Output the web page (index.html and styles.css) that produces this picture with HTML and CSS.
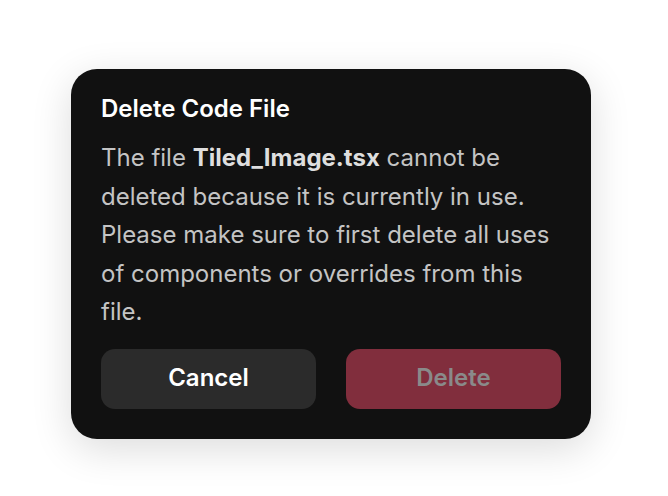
FILE: index.html
```html
<!DOCTYPE html>
<html>
<head>
<meta charset="utf-8">
<link rel="stylesheet" href="styles.css">
</head>
<body>
<div class="dialog">
  <h1 class="title">Delete Code File</h1>
  <p class="message">The file <strong>Tiled_Image.tsx</strong> cannot be deleted because it is currently in use. Please make sure to first delete all uses of components or overrides from this file.</p>
  <div class="actions">
    <button class="btn btn-cancel">Cancel</button>
    <button class="btn btn-delete">Delete</button>
  </div>
</div>
</body>
</html>
```
FILE: styles.css
```css
* { box-sizing: border-box; }
html, body { margin: 0; padding: 0; background: #ffffff; }
body {
  width: 668px;
  height: 496px;
  font-family: Inter, "Noto Sans", sans-serif;
  padding: 69px 0 0 71px;
}
.dialog {
  width: 520px;
  height: 370px;
  background: #111111;
  border-radius: 26px;
  padding: 23px 30px 30px;
  display: flex;
  flex-direction: column;
  box-shadow: 0 10px 40px rgba(0,0,0,0.14);
}
.title {
  margin: 0;
  font-size: 24px;
  line-height: 34px;
  font-weight: 600;
  color: #ffffff;
}
.message {
  margin: 13px 0 0;
  font-size: 24px;
  line-height: 38.5px;
  color: #c4c4c4;
  font-weight: 400;
}
.message strong { color: #dedede; font-weight: 700; }
.actions {
  margin-top: auto;
  display: flex;
  gap: 30px;
}
.btn {
  flex: 1;
  height: 60px;
  border: none;
  border-radius: 14px;
  padding: 0 0 4px;
  font-family: Inter, "Noto Sans", sans-serif;
  font-size: 24px;
  font-weight: 600;
}
.btn-cancel { background: #2b2b2b; color: #ffffff; }
.btn-delete { background: #812e3d; color: #8a8a8a; }
```
